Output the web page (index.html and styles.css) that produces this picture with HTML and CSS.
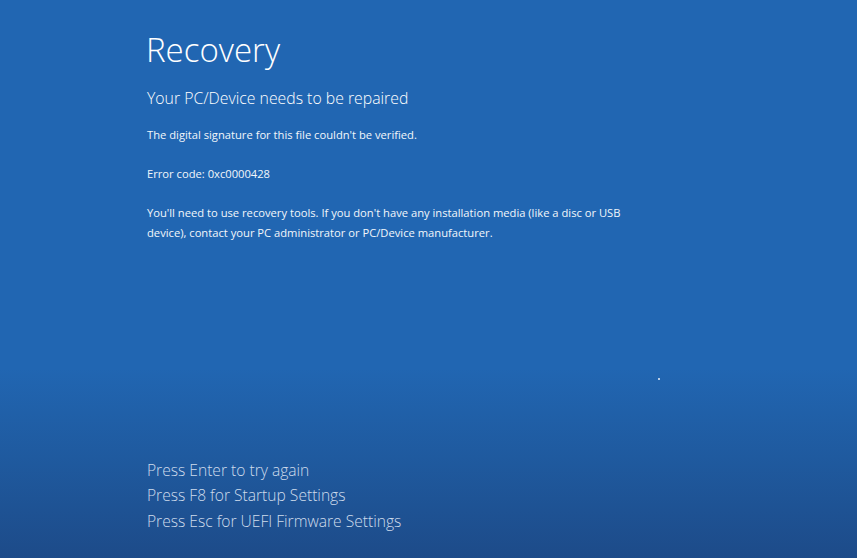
FILE: index.html
```html
<!DOCTYPE html>
<html lang="en">
<head>
    <meta charset="UTF-8">
    <title>Recovery</title>
    <link rel="stylesheet" href="styles.css">
</head>
<body>
    <div class="screen">
        <div class="content">
            <h1 class="title">Recovery</h1>
            <h2 class="subtitle">Your PC/Device needs to be repaired</h2>
            <p class="msg">The digital signature for this file couldn't be verified.</p>
            <p class="msg">Error code: 0xc0000428</p>
            <p class="msg">You'll need to use recovery tools. If you don't have any installation media (like a disc or USB<br>device), contact your PC administrator or PC/Device manufacturer.</p>
        </div>
        <ul class="keys">
            <li>Press Enter to try again</li>
            <li>Press F8 for Startup Settings</li>
            <li>Press Esc for UEFI Firmware Settings</li>
        </ul>
        <span class="cursor-dot"></span>
    </div>
</body>
</html>
```

FILE: styles.css
```css
body {
    margin: 0;
    font-family: "Open Sans", "Noto Sans", Arial, sans-serif;
    color: #ffffff;
}
.screen {
    position: relative;
    display: flex;
    flex-direction: column;
    justify-content: space-between;
    height: 100vh;
    box-sizing: border-box;
    padding: 0 0 24px 146px;
    background: linear-gradient(to bottom, #2166b2 0%, #2166b2 66%, #1f5a9f 82%, #1d4b89 100%);
    overflow: hidden;
}
.content {
    padding-top: 28px;
}
.title {
    margin: 0;
    font-size: 33px;
    font-weight: 300;
    line-height: 44px;
}
.subtitle {
    margin: 16px 0 0 1px;
    font-size: 15.8px;
    font-weight: 300;
    line-height: 20px;
}
.msg {
    margin: 19px 0 0 1px;
    font-size: 11.2px;
    line-height: 20px;
    color: #f2f6fb;
}
.subtitle + .msg {
    margin-top: 17px;
}
.keys {
    list-style: none;
    margin: 0;
    padding: 0 0 0 1px;
}
.keys li {
    font-size: 15.6px;
    font-weight: 300;
    line-height: 25.5px;
    color: #cfdcec;
}
.cursor-dot {
    position: absolute;
    left: 658px;
    top: 378px;
    width: 2px;
    height: 2px;
    background-color: #b9cde6;
}
```
